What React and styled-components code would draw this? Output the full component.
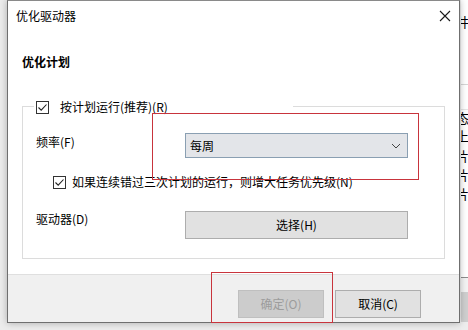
import React from 'react';
import styled, { createGlobalStyle } from 'styled-components';

const GlobalStyle = createGlobalStyle`
  html, body {
    margin: 0;
    padding: 0;
    background: #ebebeb;
    font-family: "Noto Sans CJK SC", "Noto Sans", sans-serif;
    font-size: 12px;
    color: #000;
  }
`;

const Desktop = styled.div`
  width: 468px;
  height: 330px;
  display: flex;
  padding-left: 7px;
  box-sizing: border-box;
  overflow: hidden;
  background: #ececec;
`;

const Dialog = styled.div`
  position: relative;
  z-index: 1;
  width: 454px;
  height: 323px;
  box-sizing: border-box;
  border: 1px solid #6f6f6f;
  border-top-color: #8a8a8a;
  background: #fff;
  display: flex;
  flex-direction: column;
  box-shadow: 0 0 7px rgba(0, 0, 0, 0.28);
`;

const TitleBar = styled.div`
  height: 29px;
  display: flex;
  align-items: center;
  justify-content: space-between;
  padding: 0 8px 0 8px;
  line-height: 16px;
`;

const CloseIcon = () => (
  <svg width="12" height="12" viewBox="0 0 12 12">
    <path d="M1 1 L11 11 M11 1 L1 11" stroke="#1a1a1a" strokeWidth="1.1" fill="none" />
  </svg>
);

const Body = styled.div`
  flex: 1;
  padding: 24px 14px 0 14px;
  display: flex;
  flex-direction: column;
`;

const Heading = styled.div`
  font-weight: bold;
  line-height: 16px;
`;

const Group = styled.div`
  position: relative;
  margin-top: 36px;
  border: 1px solid #dcdcdc;
  padding: 26px 36px 19px 13px;
  display: flex;
  flex-direction: column;
`;

const Legend = styled.div`
  position: absolute;
  top: -8px;
  left: 11px;
  width: 257px;
  height: 16px;
  padding-left: 2px;
  background: #fff;
  display: flex;
  align-items: center;
  gap: 11px;
  line-height: 16px;
`;

const Box = styled.span`
  width: 13px;
  height: 13px;
  box-sizing: border-box;
  border: 1px solid #333;
  background: #fff;
  display: inline-flex;
  align-items: center;
  justify-content: center;
  flex: 0 0 auto;
`;

const Check = () => (
  <Box>
    <svg width="11" height="11" viewBox="0 0 11 11">
      <path d="M1.5 5.5 L4.2 8.2 L9.5 2.5" stroke="#222" strokeWidth="1.1" fill="none" />
    </svg>
  </Box>
);

const Row = styled.div`
  display: flex;
  align-items: flex-start;
  margin-top: ${({ gap }) => gap || 0}px;
`;

const Label = styled.div`
  width: 149px;
  flex: 0 0 auto;
  line-height: 16px;
  margin-top: ${({ offset }) => offset || 0}px;
`;

const Select = styled.div`
  flex: 1;
  height: 25px;
  box-sizing: border-box;
  border: 1px solid #8a9fb2;
  background: #e3e5e9;
  display: flex;
  align-items: center;
  justify-content: space-between;
  padding: 0 6px 0 4px;
  line-height: 16px;
`;

const Chevron = () => (
  <svg width="10" height="6" viewBox="0 0 10 6">
    <path d="M1 1 L5 5 L9 1" stroke="#444" strokeWidth="1" fill="none" />
  </svg>
);

const CheckRow = styled.div`
  display: flex;
  align-items: center;
  gap: 6px;
  margin-top: 16px;
  padding-left: 17px;
  line-height: 16px;
`;

const Button = styled.div`
  height: 28px;
  box-sizing: border-box;
  border: 1px solid ${({ disabled }) => (disabled ? '#bfbfbf' : '#adadad')};
  background: ${({ disabled }) => (disabled ? '#cccccc' : '#e1e1e1')};
  color: ${({ disabled }) => (disabled ? '#9c9c9c' : '#000')};
  display: flex;
  align-items: center;
  justify-content: center;
  line-height: 16px;
  width: ${({ width }) => (width ? `${width}px` : 'auto')};
  flex: ${({ width }) => (width ? '0 0 auto' : '1')};
`;

const Footer = styled.div`
  height: 48px;
  box-sizing: border-box;
  margin-top: 13px;
  border-top: 1px solid #dfdfdf;
  background: #f0f0f0;
  display: flex;
  justify-content: flex-end;
  gap: 11px;
  padding: 15px 38px 0 0;
`;

const Marker = styled.div`
  position: absolute;
  border: 1px solid #c8343c;
  pointer-events: none;
`;

const Backdrop = styled.div`
  width: 7px;
  height: 330px;
  margin-left: 1px;
  background: #fff;
  display: flex;
  flex-direction: column;
  overflow: hidden;
  font-size: 13px;
  line-height: 16px;
`;

const Frag = styled.div`
  height: ${({ h }) => h}px;
  flex: 0 0 auto;
  margin-left: -5px;
  display: flex;
  align-items: center;
  border-bottom: ${({ line }) => (line ? `1px solid ${line}` : 'none')};
  background: ${({ bg }) => bg || 'transparent'};
  box-sizing: border-box;
`;

export default function App() {
  return (
    <>
      <GlobalStyle />
      <Desktop>
        <Dialog>
          <TitleBar>
            <span>优化驱动器</span>
            <CloseIcon />
          </TitleBar>
          <Body>
            <Heading>优化计划</Heading>
            <Group>
              <Legend>
                <Check />
                <span>按计划运行(推荐)(R)</span>
              </Legend>
              <Row>
                <Label offset={1}>频率(F)</Label>
                <Select>
                  <span>每周</span>
                  <Chevron />
                </Select>
              </Row>
              <CheckRow>
                <Check />
                <span>如果连续错过三次计划的运行，则增大任务优先级(N)</span>
              </CheckRow>
              <Row gap={21}>
                <Label>驱动器(D)</Label>
                <Button>选择(H)</Button>
              </Row>
            </Group>
          </Body>
          <Footer>
            <Button disabled width={86}>确定(O)</Button>
            <Button width={86}>取消(C)</Button>
          </Footer>
          <Marker style={{ left: 144, top: 112, width: 265, height: 65 }} />
          <Marker style={{ left: 203, top: 271, width: 120, height: 49 }} />
        </Dialog>
        <Backdrop>
          <Frag h={14} />
          <Frag h={16}>井</Frag>
          <Frag h={55} line="#d6d6d6" />
          <Frag h={25} line="#e6e6e6" />
          <Frag h={16}>态</Frag>
          <Frag h={20}>上</Frag>
          <Frag h={19}>片</Frag>
          <Frag h={19}>片</Frag>
          <Frag h={19}>片</Frag>
          <Frag h={75} line="#8c8c8c" />
          <Frag h={14} bg="#f3f3f3" />
          <Frag h={30} bg="#cfcfcf" />
          <Frag h={8} bg="#ededed" />
        </Backdrop>
      </Desktop>
    </>
  );
}
